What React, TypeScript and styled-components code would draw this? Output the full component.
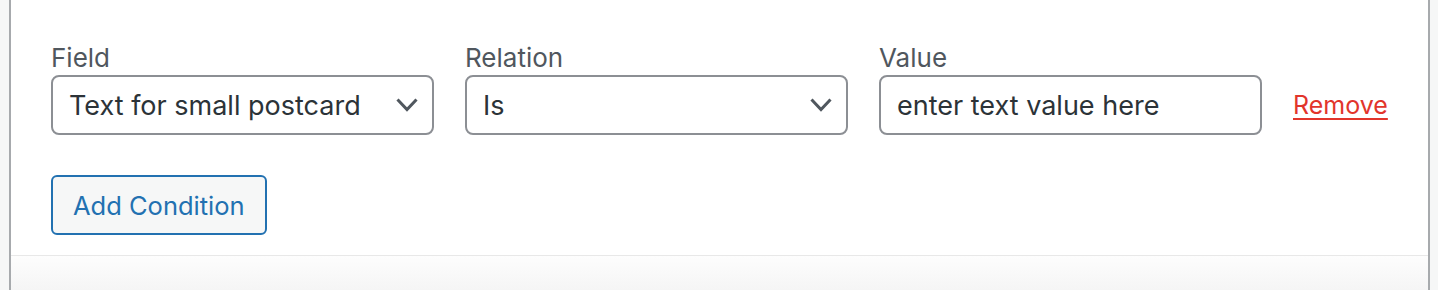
import React from 'react';
import styled, { createGlobalStyle } from 'styled-components';

const GlobalStyle = createGlobalStyle`
  html, body {
    margin: 0;
    padding: 0;
    background: #f6f7f7;
  }
  body {
    font-family: Inter, "Noto Sans", "Liberation Sans", sans-serif;
  }
`;

// Styled Components
const Frame = styled.div`
  margin-left: 9px;
  width: 1417px;
  height: 290px;
  border-left: 2px solid #a7aaad;
  border-right: 2px solid #a7aaad;
  background: #fff;
  display: flex;
  flex-direction: column;
`;

const Body = styled.div`
  padding: 43px 40px 20px 40px;
  border-bottom: 1px solid #e8e8e8;
  display: flex;
  flex-direction: column;
  gap: 40px;
`;

const Footer = styled.div`
  flex: 1;
  background: linear-gradient(#fdfdfd, #f5f5f5);
`;

const ConditionRow = styled.div`
  display: flex;
  align-items: flex-end;
  gap: 31px;
`;

const Column = styled.div`
  width: 383px;
  display: flex;
  flex-direction: column;
  gap: 2px;
`;

const Label = styled.label`
  font-size: 26px;
  line-height: 30px;
  color: #50575e;
`;

const SelectWrap = styled.div`
  position: relative;
`;

const Select = styled.select`
  appearance: none;
  -webkit-appearance: none;
  box-sizing: border-box;
  width: 100%;
  height: 60px;
  margin: 0;
  padding: 0 50px 0 16px;
  border: 2px solid #8c8f94;
  border-radius: 8px;
  background: #fff;
  font-family: inherit;
  font-size: 27px;
  color: #2c3338;
  outline: none;
`;

const Chevron = styled.svg`
  position: absolute;
  right: 16px;
  top: 23px;
  width: 22px;
  height: 14px;
  pointer-events: none;
`;

const TextInput = styled.input`
  box-sizing: border-box;
  width: 100%;
  height: 60px;
  margin: 0;
  padding: 0 16px;
  border: 2px solid #8c8f94;
  border-radius: 8px;
  background: #fff;
  font-family: inherit;
  font-size: 27px;
  color: #2c3338;
  outline: none;
`;

const RemoveLink = styled.a`
  height: 60px;
  display: flex;
  align-items: center;
  font-size: 25px;
  color: #e2352b;
  text-decoration: underline;
  text-underline-offset: 4px;
  text-decoration-thickness: 2px;
  cursor: pointer;
`;

const Button = styled.button`
  align-self: flex-start;
  box-sizing: border-box;
  height: 60px;
  padding: 0 20px;
  border: 2px solid #2271b1;
  border-radius: 6px;
  background: #f6f7f7;
  color: #2271b1;
  font-family: inherit;
  font-size: 25.5px;
  cursor: pointer;
`;

const ChevronIcon = () => (
  <Chevron viewBox="0 0 22 14" fill="none">
    <polyline points="1.5,1.5 11,11.5 20.5,1.5" stroke="#50575e" strokeWidth="3" />
  </Chevron>
);

const App: React.FC = () => {
  return (
    <>
      <GlobalStyle />
      <Frame>
        <Body>
          <ConditionRow>
            <Column>
              <Label>Field</Label>
              <SelectWrap>
                <Select defaultValue="small">
                  <option value="small">Text for small postcard</option>
                </Select>
                <ChevronIcon />
              </SelectWrap>
            </Column>
            <Column>
              <Label>Relation</Label>
              <SelectWrap>
                <Select defaultValue="is">
                  <option value="is">Is</option>
                  <option value="isnot">Is not</option>
                </Select>
                <ChevronIcon />
              </SelectWrap>
            </Column>
            <Column>
              <Label>Value</Label>
              <TextInput defaultValue="enter text value here" />
            </Column>
            <RemoveLink>Remove</RemoveLink>
          </ConditionRow>
          <Button>Add Condition</Button>
        </Body>
        <Footer />
      </Frame>
    </>
  );
};

export default App;
